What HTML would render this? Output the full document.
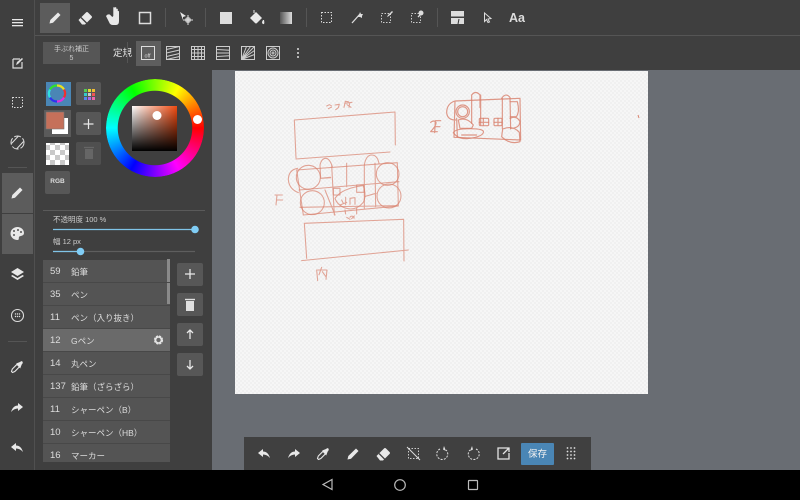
<!DOCTYPE html>
<html><head><meta charset="utf-8"><style>
*{box-sizing:border-box;margin:0;padding:0}
html,body{width:800px;height:500px;overflow:hidden;background:#696d73}
body{position:relative;font-family:"Liberation Sans","Noto Sans CJK JP",sans-serif;color:#ddd;filter:blur(.3px)}
.a{position:absolute}
.row{position:absolute;left:43px;width:127px;height:22px;background:#545454;font-size:8.500px;color:#ddd;line-height:24px}
.row b{font-weight:normal;position:absolute;left:7px;font-size:9.500px;line-height:23px}
.row i{font-style:normal;position:absolute;left:28px;white-space:nowrap}
.btn{position:absolute;background:#575757;border-radius:2px}
</style></head><body>
<div class="a" style="left:0;top:0;width:212px;height:470px;background:#3f3f3f"></div>
<div class="a" style="left:0;top:0;width:800px;height:70px;background:#3f3f3f"></div>
<div class="a" style="left:34px;top:0;width:1px;height:470px;background:#505050"></div>
<div class="a" style="left:35px;top:35px;width:765px;height:1px;background:#555"></div>
<div class="a" style="left:40px;top:3px;width:30px;height:30px;background:#5c5c5c"></div>
<div class="a" style="left:43px;top:42px;width:57px;height:22px;background:#565656;font-size:7px;line-height:9px;text-align:center;padding-top:3px;color:#ccc">手ぶれ補正<br>5</div>
<div class="a" style="left:113px;top:48px;font-size:9.500px;color:#e4e4e4;line-height:12px">定規</div>
<div class="a" style="left:136px;top:41px;width:25px;height:25px;background:#5e5e5e"></div>
<div class="a" style="left:46px;top:82px;width:25px;height:24px;background:#4a86b5"></div>
<div class="btn" style="left:76px;top:82px;width:25px;height:23px"></div>
<div class="a" style="left:44px;top:110px;width:27px;height:27px;background:#5a5a5a"></div>
<div class="btn" style="left:76px;top:112px;width:25px;height:23px"></div>
<div class="btn" style="left:76px;top:142px;width:25px;height:23px;background:#4f4f4f"></div>
<div class="btn" style="left:45px;top:171px;width:25px;height:23px"></div>
<div class="a" style="left:45px;top:177px;width:25px;text-align:center;font-size:6.500px;font-weight:bold;line-height:10px;color:#ddd">RGB</div>
<div class="a" style="left:2px;top:173px;width:31px;height:40px;background:#5c5c5c"></div>
<div class="a" style="left:2px;top:214px;width:31px;height:40px;background:#5c5c5c"></div>
<div class="a" style="left:43px;top:210px;width:162px;height:1px;background:#5a5a5a"></div>
<div class="a" style="left:53px;top:214px;font-size:7.500px;line-height:11px;color:#ccc;white-space:nowrap">不透明度 100 %</div>
<div class="a" style="left:53px;top:236px;font-size:7.500px;line-height:11px;color:#ccc;white-space:nowrap">幅 12 px</div>
<div class="row" style="top:260px"><b>59</b><i>鉛筆</i></div>
<div class="row" style="top:283px"><b>35</b><i>ペン</i></div>
<div class="row" style="top:306px"><b>11</b><i>ペン（入り抜き）</i></div>
<div class="row" style="top:329px;background:#6a6a6a"><b>12</b><i>Gペン</i></div>
<div class="row" style="top:352px"><b>14</b><i>丸ペン</i></div>
<div class="row" style="top:375px"><b>137</b><i>鉛筆（ざらざら）</i></div>
<div class="row" style="top:398px"><b>11</b><i>シャーペン（B）</i></div>
<div class="row" style="top:421px"><b>10</b><i>シャーペン（HB）</i></div>
<div class="row" style="top:444px;height:18px"><b>16</b><i>マーカー</i></div>
<div class="a" style="left:167px;top:259px;width:3px;height:45px;background:#8a8a8a"></div>
<div class="btn" style="left:177px;top:263px;width:26px;height:23px"></div>
<div class="btn" style="left:177px;top:293px;width:26px;height:23px"></div>
<div class="btn" style="left:177px;top:323px;width:26px;height:23px"></div>
<div class="btn" style="left:177px;top:353px;width:26px;height:23px"></div>
<div class="a" style="left:235px;top:71px;width:413px;height:323px;background:#f4f4f4"></div>
<div class="a" style="left:244px;top:437px;width:347px;height:33px;background:#404040"></div>
<div class="a" style="left:521px;top:443px;width:33px;height:22px;background:#4a86b5;border-radius:1px;font-size:9.500px;line-height:24px;text-align:center;color:#f0f0f0">保存</div>
<div class="a" style="left:0;top:470px;width:800px;height:30px;background:#000"></div>

<svg class="a" style="left:0;top:0" width="800" height="500" viewBox="0 0 800 500" fill="none">
<defs>
<pattern id="ck" width="10" height="10" patternUnits="userSpaceOnUse"><rect width="10" height="10" fill="#fff"/><rect width="5" height="5" fill="#c9c9c9"/><rect x="5" y="5" width="5" height="5" fill="#c9c9c9"/></pattern>
<pattern id="ck2" width="4" height="4" patternUnits="userSpaceOnUse"><rect width="4" height="4" fill="#f6f6f6"/><rect width="2" height="2" fill="#f0f0f0"/><rect x="2" y="2" width="2" height="2" fill="#f0f0f0"/></pattern>
<linearGradient id="gr"><stop offset="0" stop-color="#555"/><stop offset="1" stop-color="#ddd"/></linearGradient>
<linearGradient id="sw" x1="0" x2="1" y1="0" y2="0"><stop offset="0" stop-color="#fff"/><stop offset="1" stop-color="#f04a10"/></linearGradient>
<linearGradient id="sb" x1="0" x2="0" y1="0" y2="1"><stop offset="0" stop-color="#000" stop-opacity="0"/><stop offset="1" stop-color="#000"/></linearGradient>
<g id="pen"><path d="M-5.500 5.500l.8-3.500L3-5.500l2.500 2.500-7.500 7.700z" fill="#e8e8e8"/></g>
<g id="eraser"><path d="M-6.500 2L1-5.500q1-1 2 0l3.500 3.500q1 1 0 2L0 6.500H-3z" fill="#e8e8e8"/><path d="M-4-.5L2 5.500" stroke="#404040" stroke-width="1.300"/></g>
<g id="drop"><path d="M-4.500 5.500l-1-1 .8-2.500 4.700-4.700 2.500 2.500-4.700 4.700z" stroke="#e8e8e8" stroke-width="1.100"/><path d="M-.8-3.500L3-5Q4.700-6.500 5.500-5.300T4.700-2.500L3.200 1.500z" fill="#e8e8e8"/></g>
<path id="undo" d="M-6-1L-1-5V-2.500Q4-2.500 6 4 3 .5-1 .5V3z" fill="#e8e8e8"/>
<path id="redo" d="M6-1L1-5V-2.500Q-4-2.500-6 4-3 .5 1 .5V3z" fill="#e8e8e8"/>
</defs>
<rect x="235" y="71" width="413" height="323" fill="url(#ck2)"/>

<!-- left column icons -->
<g fill="#e8e8e8"><rect x="12" y="19" width="11" height="1.300"/><rect x="12" y="22" width="11" height="1.300"/><rect x="12" y="25" width="11" height="1.300"/></g>
<path d="M13 59h7M13 59v9h9v-6" stroke="#ddd" stroke-width="1.200"/><path d="M16 65l1-3 5-4 1 1-5 5z" fill="#ddd"/>
<rect x="12.500" y="97.500" width="10" height="10" stroke="#ddd" stroke-dasharray="1.500 1.500"/>
<circle cx="17.500" cy="142.500" r="6.500" stroke="#ddd" stroke-dasharray="7 2"/><path d="M11.500 143.500l7-7.500M16.500 149l7-7.500" stroke="#ddd"/>
<use href="#pen" x="17" y="193"/>
<path d="M17.500 227a7 6.500 0 1 0 0 13c2 0 1-2 1.500-3 .5-1.500 5-.5 5-4 0-3.500-3-6-6.500-6z" fill="#e8e8e8"/><g fill="#555"><circle cx="14" cy="231" r="1"/><circle cx="18" cy="230" r="1"/><circle cx="21" cy="232" r="1"/><circle cx="14" cy="235" r="1"/></g>
<path d="M17.500 268l6.500 4-6.500 4-6.500-4z" fill="#e8e8e8"/><path d="M11 276l6.500 4 6.500-4-1.500-1-5 3-5-3z" fill="#e8e8e8"/>
<circle cx="17.500" cy="315.500" r="6" stroke="#ddd" stroke-width="1.100"/><g fill="#ddd"><circle cx="15.500" cy="314" r=".7"/><circle cx="17.500" cy="314" r=".7"/><circle cx="19.500" cy="314" r=".7"/><circle cx="15.500" cy="316.500" r=".7"/><circle cx="17.500" cy="316.500" r=".7"/><circle cx="19.500" cy="316.500" r=".7"/></g>
<path d="M8 167.500h19M8 341.500h19" stroke="#555"/>
<use href="#drop" x="17" y="367"/><use href="#redo" x="17" y="408"/><use href="#undo" x="17" y="448"/>

<!-- top toolbar icons -->
<use href="#pen" x="55" y="18"/><use href="#eraser" x="85" y="18"/>
<path transform="translate(0 -5)" d="M106 21l3 6q1 3 4 3h3q3 0 3-4v-9q0-1.500-1.200-1v5-7q-1.500-1-1.500.5v5-7q-1.500-1-1.500.5v6.500-7q-1.500-1-1.500.5v8l-1 1-2.500-2.500q-2-.5-2.800.5z" fill="#e8e8e8"/>
<rect x="139.500" y="12.500" width="11" height="11" stroke="#ddd" stroke-width="1.500"/>
<path d="M180 12l6 4-3 1v3z" fill="#e8e8e8"/><circle cx="188" cy="20" r="3" fill="#bbb"/><path d="M188 15v10M183 20h10" stroke="#ddd"/>
<path d="M165.500 8v19M205.500 8v19M306.500 8v19M437.500 8v19M127.500 42v21" stroke="#555"/>
<rect x="220" y="12" width="12" height="12" fill="#ddd"/>
<path d="M250 18l6-6 6 6-5 5q-1 1-2 0z" fill="#e8e8e8"/><path d="M254 13v-3" stroke="#e8e8e8"/><path d="M263 20q-2 3 0 4t1-4z" fill="#e8e8e8"/>
<rect x="280" y="12" width="12" height="12" fill="url(#gr)"/>
<rect x="321.500" y="12.500" width="10" height="10" stroke="#ddd" stroke-dasharray="1.500 1.500"/>
<path d="M352 23l8-9" stroke="#ddd" stroke-width="1.300"/><path d="M360 12l1 2 2 0-1 2 0 2-2-1-2 0 1-2z" fill="#ddd"/>
<rect x="381.500" y="13.500" width="9" height="9" stroke="#ccc" stroke-dasharray="1.500 1.500"/><path d="M387 17l1-2 4-4 1 1-4 4z" fill="#ddd"/>
<rect x="411.500" y="13.500" width="9" height="9" stroke="#ccc" stroke-dasharray="1.500 1.500"/><circle cx="421" cy="13" r="2.500" fill="#ddd"/><path d="M421 14l-3 3" stroke="#ddd" stroke-width="1.300"/>
<rect x="451" y="11" width="13" height="5.500" fill="#ddd"/><rect x="451" y="18" width="13" height="6" fill="#ddd"/><path d="M458 24l1-5" stroke="#333"/>
<path d="M484.500 13l6.500 5.500-3 .5 1.500 3-1.500.5-1.500-3-2 2z" stroke="#ddd"/>
<text x="509" y="22" font-family="Liberation Sans" font-size="12.500" font-weight="bold" fill="#ddd">Aa</text>

<!-- ruler icons -->
<rect x="141.500" y="46.500" width="13" height="13" stroke="#ddd"/>
<text x="144.500" y="57.500" font-family="Liberation Sans" font-size="5.500" fill="#ddd">off</text>
<g stroke="#ccc"><rect x="166.500" y="46.500" width="13" height="13"/><path d="M166.500 49.500l13-3M166.500 53l13-3M166.500 56.500l13-3M166.500 59.500l13-3"/>
<rect x="191.500" y="46.500" width="13" height="13"/><path d="M191.500 49.500h13M191.500 53h13M191.500 56.500h13M194.500 46.500v13M198 46.500v13M201.500 46.500v13"/>
<rect x="216.500" y="46.500" width="13" height="13"/><path d="M216.500 49.500l13 .8M216.500 53h13M216.500 56.500l13-.8"/>
<rect x="241.500" y="46.500" width="13" height="13"/><path d="M241.500 59.500l13-13M241.500 59.500l5-13M241.500 59.500l9-13M241.500 59.500l13-9M241.500 59.500l13-5"/>
<rect x="266.500" y="46.500" width="13" height="13"/><circle cx="273" cy="53" r="5"/><circle cx="273" cy="53" r="3"/><circle cx="273" cy="53" r="1"/></g>
<g fill="#ddd"><circle cx="298" cy="49" r="1"/><circle cx="298" cy="53" r="1"/><circle cx="298" cy="57" r="1"/></g>

<!-- color panel -->
<g fill="none" stroke-width="2.200"><path d="M57 85.500a8 8 0 0 1 7 4" stroke="#e8e020"/><path d="M64 89.500a8 8 0 0 1 0 8" stroke="#f03030"/><path d="M64 97.500a8 8 0 0 1-7 4" stroke="#e030e0"/><path d="M57 101.500a8 8 0 0 1-7-4" stroke="#3030f0"/><path d="M50 97.500a8 8 0 0 1 0-8" stroke="#30e0e0"/><path d="M50 89.500a8 8 0 0 1 7-4" stroke="#30e030"/></g>
<g><rect x="84" y="89" width="3" height="3" fill="#5c5"/><rect x="88" y="89" width="3" height="3" fill="#dd3"/><rect x="92" y="89" width="3" height="3" fill="#eb3"/><rect x="84" y="93" width="3" height="3" fill="#3cc"/><rect x="88" y="93" width="3" height="3" fill="#ccc"/><rect x="92" y="93" width="3" height="3" fill="#e55"/><rect x="84" y="97" width="3" height="3" fill="#58e"/><rect x="88" y="97" width="3" height="3" fill="#a6e"/><rect x="92" y="97" width="3" height="3" fill="#e6a"/></g>
<rect x="52" y="118" width="16" height="16" fill="#fff"/><rect x="46" y="112" width="18" height="17" fill="#c5705a"/><rect x="46" y="112" width="18" height="17" stroke="#777" stroke-width=".6"/>
<path d="M88.500 119v10M83.500 124h10" stroke="#e8e8e8" stroke-width="1.200"/>
<rect x="46" y="143" width="23" height="22" fill="url(#ck)"/>
<path d="M85 149h8v10h-8z" fill="#666"/><path d="M84 147.500h10" stroke="#666" stroke-width="1.300"/>

<!-- wheel -->
<foreignObject x="106" y="79" width="98" height="98"><div xmlns="http://www.w3.org/1999/xhtml" style="width:98px;height:98px;border-radius:50%;background:conic-gradient(from 90deg,#f00,#f0f 60deg,#00f 120deg,#0ff 180deg,#0f0 240deg,#ff0 300deg,#f00);-webkit-mask:radial-gradient(circle,transparent 37px,#000 37.5px);mask:radial-gradient(circle,transparent 37px,#000 37.5px)"></div></foreignObject>
<rect x="132" y="106" width="45" height="45" fill="url(#sw)"/><rect x="132" y="106" width="45" height="45" fill="url(#sb)"/>
<circle cx="157" cy="115.500" r="4.500" fill="#fff"/><circle cx="197.500" cy="119.500" r="4.500" fill="#fff"/>

<!-- sliders -->
<path d="M53 229.500h142" stroke="#80c4e8" stroke-width="1.300"/><circle cx="195" cy="229.500" r="3.800" fill="#80cdf5"/>
<path d="M53 251.500h142" stroke="#5e5e5e" stroke-width="1.300"/><path d="M53 251.500h28" stroke="#80c4e8" stroke-width="1.300"/><circle cx="80.500" cy="251.500" r="3.800" fill="#80cdf5"/>

<!-- list -->
<g stroke="#484848"><path d="M43 282.500h127M43 305.500h127M43 328.500h127M43 351.500h127M43 374.500h127M43 397.500h127M43 420.500h127M43 443.500h127"/></g>
<circle cx="158.500" cy="340" r="3.500" stroke="#e4e4e4" stroke-width="2.200" stroke-dasharray="2 .8"/><circle cx="158.500" cy="340" r="3" stroke="#e4e4e4" stroke-width="1.600"/>
<path d="M190 269v10M185 274h10" stroke="#e8e8e8" stroke-width="1.300"/>
<path d="M186 301h8v10h-8z" fill="#e0e0e0"/><path d="M185 299.500h10" stroke="#e0e0e0" stroke-width="1.400"/>
<path d="M190 339v-9M187 333l3-3 3 3" stroke="#e8e8e8" stroke-width="1.300"/>
<path d="M190 360v9M187 366l3 3 3-3" stroke="#e8e8e8" stroke-width="1.300"/>

<!-- sketch 1 -->
<g transform="translate(275 90) scale(.3333)" stroke="#d8806c" stroke-width="3.200" stroke-opacity=".7" stroke-linecap="round" stroke-linejoin="round">
<path d="M155 48l8-4 6 3M160 56l10-5M180 45l13-2-3 10-8 6M207 52l4-18 9 1M209 40l22-3M216 44l12 8M224 40l-2 12"/>
<path d="M58 90l302-24M58 90l5 114M360 66l1 99M63 207l282-21"/>
<path d="M65 240l302-22 3 130-285 27zM65 240l20 135M40 270q0-30 28-35M40 270q3 28 30 38"/>
<circle cx="100" cy="262" r="36"/><circle cx="112" cy="338" r="36"/><circle cx="338" cy="252" r="34"/><circle cx="342" cy="318" r="36"/>
<path d="M72 300l300-25M75 352l292-5M135 225q5-20 17-20t20 25M135 225l2 40 30-2M137 265l30-3M150 300l30 75M170 225l8 150M215 220v70M268 225q5-30 22-30t22 25M268 225v130M300 220l2 130M268 320l35-10"/>
<path d="M180 325q20-30 85-38 10 30 0 50-25 30-60 15-20-10-25-27z"/>
<rect x="175" y="295" width="20" height="20"/><rect x="245" y="285" width="22" height="22"/>
<path d="M200 330l5 10M195 345l20-8M212 322v22M225 325v18M225 325l15-2v20M210 360l2 12M245 355v17M215 382l10 6M238 378l-8 8M225 382a5 4 0 1 1 12 3"/>
<path d="M88 400l298-12 1 125M88 400l7 105M80 512l320-32"/>
<path d="M0 315h22M6 315l-3 30M5 330l18 0"/>
<path d="M125 540l3 32M128 540h28l-3 28M140 532l-8 22M142 545l10 14"/>
</g>
<!-- sketch 2 -->
<g transform="translate(420 85) scale(.3333)" stroke="#d8806c" stroke-width="3.500" stroke-opacity=".8" stroke-linecap="round" stroke-linejoin="round">
<path d="M32 112q10-8 16 0 2 8-16 28h20M62 107h-16l-2 36M46 125h14"/>
<path d="M105 48l195-8 2 125-200-8zM105 48q-25 8-25 35 2 22 27 22"/>
<circle cx="128" cy="80" r="20"/><circle cx="128" cy="80" r="15"/>
<path d="M155 30q12-15 25 0v38M155 30v85M245 40q12-18 25-3l2 95M247 40v90M182 30v90M110 100l2 55"/>
<path d="M115 105q25-10 45 15l-5 10h-35z"/><path d="M100 143q5-12 50-12t40 12-40 17-50-17z"/><path d="M125 150h45"/>
<rect x="178" y="100" width="28" height="22" rx="3"/><rect x="222" y="100" width="24" height="22" rx="3"/><path d="M190 100v20M234 100v20M178 112h28M222 112h24"/>
<path d="M270 50h22q8 30-3 45h-18M270 100q20-10 30 10-2 20-28 20M248 132q30-12 50 10l2 28q-30 10-55-15z"/>
</g>
<path d="M638 115l1 3" stroke="#d8806c"/>

<!-- bottom toolbar -->
<use href="#undo" x="264" y="454"/><use href="#redo" x="294" y="454"/><use href="#drop" x="323" y="454"/><use href="#pen" x="353" y="454"/><use href="#eraser" x="383" y="454"/>
<rect x="408.500" y="448.500" width="10" height="10" stroke="#ccc" stroke-dasharray="1.500 1.500"/><path d="M407 447l13 13" stroke="#ddd"/>
<path d="M440 449a5.500 5.500 0 1 0 6 1" stroke="#ddd" stroke-dasharray="2 1.300"/><path d="M444 446l-1 3.500 3 1.500z" fill="#ddd"/>
<path d="M476 449a5.500 5.500 0 1 1-6 1" stroke="#ddd" stroke-dasharray="2 1.300"/><path d="M472 446l1 3.500-3 1.500z" fill="#ddd"/>
<path d="M505 448h-7v11h11v-6M503 454l6-6M505 448h4v4" stroke="#e4e4e4" stroke-width="1.300"/>
<g fill="#ddd"><circle cx="567.500" cy="448" r=".9"/><circle cx="571" cy="448" r=".9"/><circle cx="574.500" cy="448" r=".9"/><circle cx="567.500" cy="451.500" r=".9"/><circle cx="571" cy="451.500" r=".9"/><circle cx="574.500" cy="451.500" r=".9"/><circle cx="567.500" cy="455" r=".9"/><circle cx="571" cy="455" r=".9"/><circle cx="574.500" cy="455" r=".9"/><circle cx="567.500" cy="458.500" r=".9"/><circle cx="571" cy="458.500" r=".9"/><circle cx="574.500" cy="458.500" r=".9"/></g>

<!-- nav -->
<path d="M332 479.500v10l-9-5z" stroke="#bbb" stroke-width="1.200"/>
<circle cx="400" cy="485" r="5.300" stroke="#bbb" stroke-width="1.200"/>
<rect x="468.500" y="480.500" width="9" height="9" rx=".5" stroke="#bbb" stroke-width="1.200"/>
</svg>
</body></html>
